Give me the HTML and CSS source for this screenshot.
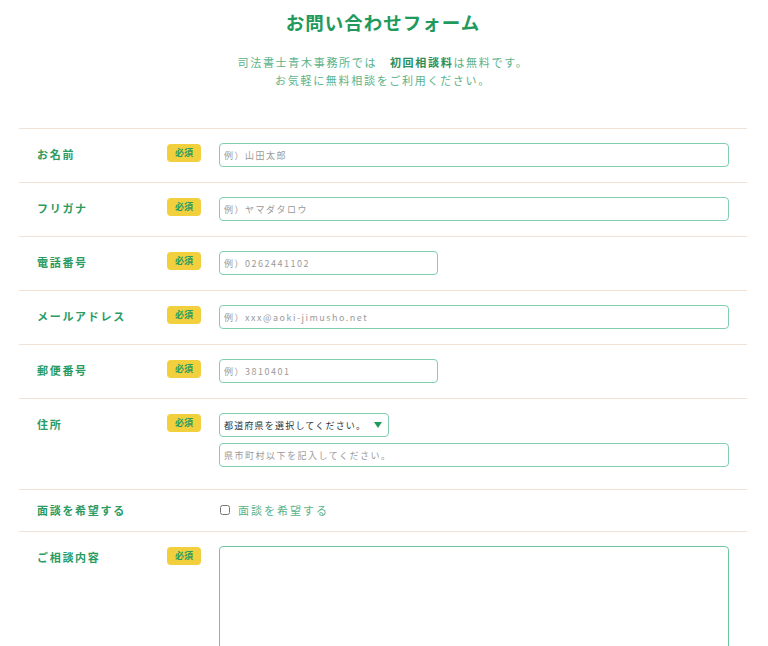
FILE: index.html
```html
<!DOCTYPE html>
<html lang="ja">

<head>
  <meta charset="UTF-8" />
  <meta name="viewport" content="width=device-width, initial-scale=1.0" />
  <title>お問い合わせフォーム</title>
  <link rel="stylesheet" href="styles.css">
</head>

<body>
  <div id="contact">
    <h1 class="title">お問い合わせフォーム</h1>
    <p class="lead">司法書士青木事務所では　<b>初回相談料</b>は無料です。<br>お気軽に無料相談をご利用ください。</p>

    <form class="form">
      <div class="row">
        <div class="label">お名前</div>
        <span class="req">必須</span>
        <div class="field">
          <input type="text" class="inp" placeholder="例）山田太郎" />
        </div>
      </div>

      <div class="row">
        <div class="label">フリガナ</div>
        <span class="req">必須</span>
        <div class="field">
          <input type="text" class="inp" placeholder="例）ヤマダタロウ" />
        </div>
      </div>

      <div class="row">
        <div class="label">電話番号</div>
        <span class="req">必須</span>
        <div class="field">
          <input type="text" class="inp short" placeholder="例）0262441102" />
        </div>
      </div>

      <div class="row">
        <div class="label">メールアドレス</div>
        <span class="req">必須</span>
        <div class="field">
          <input type="text" class="inp" placeholder="例）xxx@aoki-jimusho.net" />
        </div>
      </div>

      <div class="row">
        <div class="label">郵便番号</div>
        <span class="req">必須</span>
        <div class="field">
          <input type="text" class="inp short" placeholder="例）3810401" />
        </div>
      </div>

      <div class="row row-addr">
        <div class="label">住所</div>
        <span class="req">必須</span>
        <div class="field">
          <span class="sel-wrap">
            <select class="sel">
              <option>都道府県を選択してください。</option>
            </select>
          </span>
          <input type="text" class="inp" placeholder="県市町村以下を記入してください。" />
        </div>
      </div>

      <div class="row row-check">
        <div class="label">面談を希望する</div>
        <span class="req-none"></span>
        <div class="field">
          <label class="check"><input type="checkbox" />面談を希望する</label>
        </div>
      </div>

      <div class="row">
        <div class="label">ご相談内容</div>
        <span class="req">必須</span>
        <div class="field">
          <textarea class="area"></textarea>
        </div>
      </div>
    </form>
  </div>
</body>

</html>
```

FILE: styles.css
```css
body {
  margin: 0;
  padding: 0;
  font-family: "Noto Sans CJK JP", "Noto Sans", sans-serif;
  background: #fff;
}

#contact {
  width: 728px;
  margin: 0 0 0 19px;
  padding-top: 8px;
}

.title {
  margin: 0;
  text-align: center;
  font-size: 18.5px;
  line-height: 28px;
  letter-spacing: 1px;
  font-weight: bold;
  color: #1f9a5c;
}

.lead {
  margin: 17px 0 39px;
  text-align: center;
  font-size: 11px;
  line-height: 18px;
  letter-spacing: 1.7px;
  color: #5ab38a;
}

.lead b {
  color: #2a8f5c;
  font-weight: bold;
}

.form {
  border-top: 1px solid #f3e2d4;
}

.row {
  display: flex;
  align-items: flex-start;
  padding: 14px 18px 15px;
  border-bottom: 1px solid #f3e2d4;
}

.label {
  width: 130px;
  padding-top: 2px;
  font-size: 11px;
  line-height: 18px;
  font-weight: bold;
  letter-spacing: 1.7px;
  color: #2a9b62;
}

.req {
  width: 34px;
  height: 18px;
  margin: 1px 18px 0 0;
  background: #f2cf3c;
  border-radius: 4px;
  font-size: 9px;
  line-height: 18px;
  font-weight: bold;
  text-align: center;
  color: #2a9b62;
}

.req-none {
  width: 34px;
  margin-right: 18px;
}

.field {
  flex: 1;
  display: flex;
  flex-direction: column;
  align-items: flex-start;
  gap: 6px;
}

.inp {
  box-sizing: border-box;
  width: 100%;
  height: 24px;
  margin: 0;
  padding: 0 4px;
  border: 1.5px solid #80cfae;
  border-radius: 4px;
  font-family: "Noto Sans CJK JP", sans-serif;
  font-size: 9px;
  letter-spacing: 1.5px;
  color: #333;
}

.inp::placeholder {
  color: #9a9a9a;
}

.inp.short {
  width: 219px;
}

.row-addr {
  padding-bottom: 22px;
}

.sel-wrap {
  position: relative;
  display: block;
  height: 24px;
}

.sel {
  display: block;
  box-sizing: border-box;
  width: 170px;
  height: 24px;
  margin: 0;
  padding: 0 4px;
  appearance: none;
  -webkit-appearance: none;
  background: #fff;
  border: 1.5px solid #80cfae;
  border-radius: 4px;
  font-family: "Noto Sans CJK JP", sans-serif;
  font-size: 9px;
  letter-spacing: 1.2px;
  color: #333;
}

.sel-wrap::after {
  content: "";
  position: absolute;
  right: 7px;
  top: 9px;
  border-left: 4px solid transparent;
  border-right: 4px solid transparent;
  border-top: 6px solid #1f9a5c;
}

.row-check {
  padding: 10px 18px 12px;
}

.row-check .label {
  padding-top: 1px;
}

.check {
  display: flex;
  align-items: center;
  padding-top: 1px;
  font-size: 11px;
  line-height: 18px;
  letter-spacing: 2px;
  color: #5ab38a;
}

.check input {
  width: 10px;
  height: 10px;
  margin: 0 8px 0 1px;
}

.area {
  box-sizing: border-box;
  width: 100%;
  height: 160px;
  border: 1.5px solid #6cc6a0;
  border-radius: 4px;
}
```
